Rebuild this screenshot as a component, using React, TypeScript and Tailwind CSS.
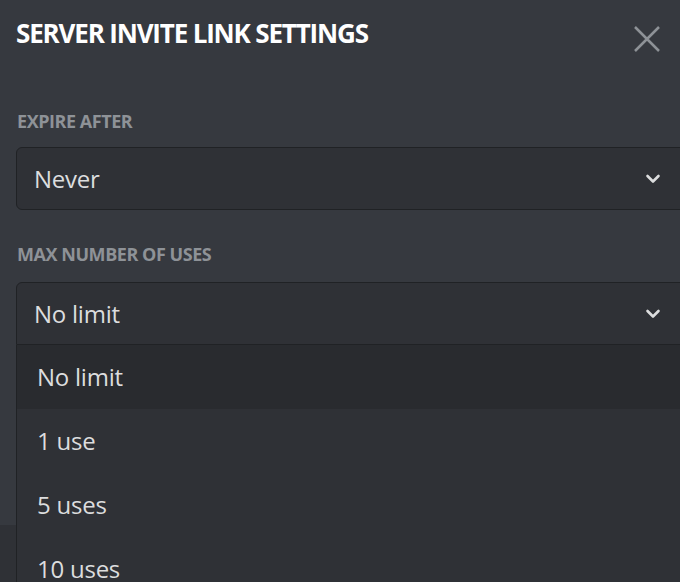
import React from "react";

// Options for the uses dropdown
const useOptions = ["No limit", "1 use", "5 uses", "10 uses"];

const Chevron = () => (
  <svg width="16" height="10" viewBox="0 0 16 10" className="text-[#dcddde]">
    <path
      d="M2.5 2l5.5 5.5L13.5 2"
      fill="none"
      stroke="currentColor"
      strokeWidth="2.6"
      strokeLinecap="round"
      strokeLinejoin="round"
    />
  </svg>
);

const SelectBox = ({ value, open }: { value: string; open?: boolean }) => (
  <div
    className={`flex items-center justify-between h-[63px] pl-[17px] pr-[34px] -mr-4 bg-[#2f3136] border border-[#202225] ${
      open ? "rounded-t-md" : "rounded-md"
    }`}
  >
    <span className="text-[24px] text-[#dcddde] tracking-[-0.01em]">{value}</span>
    <Chevron />
  </div>
);

const Label = ({ children }: { children: React.ReactNode }) => (
  <div className="text-[18px] font-bold text-[#8e9297] tracking-[-0.025em] leading-[24px] pl-[1px]">
    {children}
  </div>
);

const App = () => {
  return (
    <div
      className="w-[680px] h-[582px] overflow-hidden bg-[#36393f] relative"
      style={{ fontFamily: '"Open Sans", "Noto Sans", sans-serif' }}
    >
      {/* Header */}
      <div className="flex items-start justify-between pl-[16px] pr-[19px] pt-[17px]">
        <h1 className="text-[26px] font-bold text-white tracking-[-0.045em] leading-[32px]">
          SERVER INVITE LINK SETTINGS
        </h1>
        <svg width="28" height="28" viewBox="0 0 28 28" className="mt-[8px] text-[#8e9297]">
          <path d="M2 2l24 24M26 2L2 26" stroke="currentColor" strokeWidth="2.5" />
        </svg>
      </div>

      {/* Body */}
      <div className="pl-[16px] pt-[56px]">
        <Label>EXPIRE AFTER</Label>
        <div className="mt-[14px]">
          <SelectBox value="Never" />
        </div>

        <div className="mt-[32px]">
          <Label>MAX NUMBER OF USES</Label>
        </div>
        <div className="mt-[16px] relative">
          <SelectBox value="No limit" open />

          {/* Dropdown menu */}
          <div className="absolute left-0 -right-4 top-[63px] bg-[#2f3136] border-l border-[#202225] z-10">
            {useOptions.map((opt, idx) => (
              <div
                key={opt}
                className={`h-[64px] flex items-center pl-[20px] text-[24px] text-[#dcddde] tracking-[-0.01em] ${
                  idx === 0 ? "bg-[#292b2f]" : ""
                }`}
              >
                {opt}
              </div>
            ))}
          </div>
        </div>
      </div>

      {/* Footer strip */}
      <div className="absolute left-0 right-0 top-[525px] bottom-0 bg-[#2f3136]" />
    </div>
  );
};

export default App;
